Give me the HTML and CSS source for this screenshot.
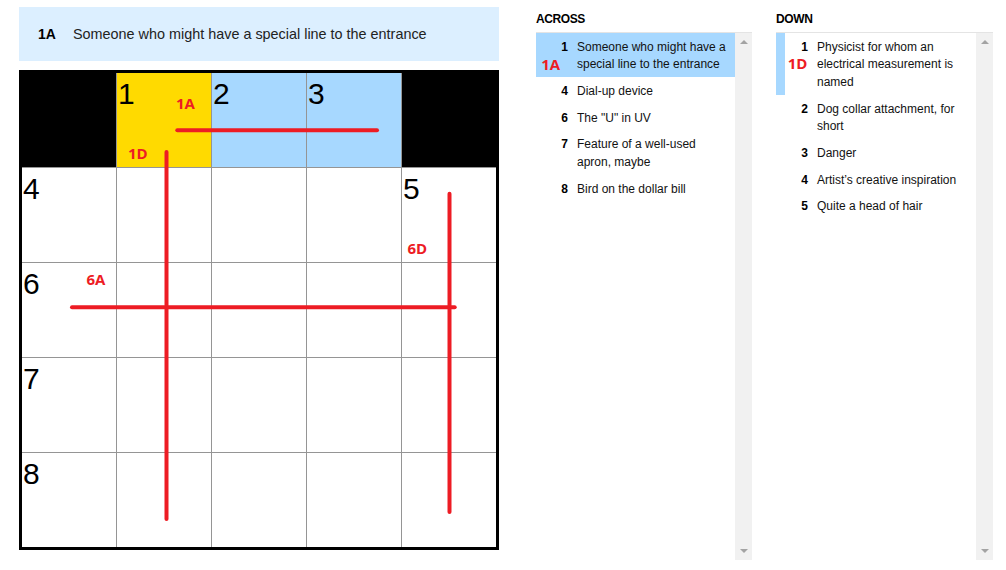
FILE: index.html
```html
<!DOCTYPE html>
<html lang="en">
<head>
<meta charset="utf-8">
<title>Crossword</title>
<link rel="stylesheet" href="styles.css">
</head>
<body>
<div class="app">
  <div class="board">
    <div class="clue-bar">
      <span class="clue-bar-num">1A</span>
      <span class="clue-bar-text">Someone who might have a special line to the entrance</span>
    </div>
    <div class="grid-wrap">
      <div class="grid">
        <div class="cell black"></div>
        <div class="cell sel"><span class="num">1</span></div>
        <div class="cell word"><span class="num">2</span></div>
        <div class="cell word"><span class="num">3</span></div>
        <div class="cell black"></div>

        <div class="cell"><span class="num">4</span></div>
        <div class="cell"></div>
        <div class="cell"></div>
        <div class="cell"></div>
        <div class="cell"><span class="num">5</span></div>

        <div class="cell"><span class="num">6</span></div>
        <div class="cell"></div>
        <div class="cell"></div>
        <div class="cell"></div>
        <div class="cell"></div>

        <div class="cell"><span class="num">7</span></div>
        <div class="cell"></div>
        <div class="cell"></div>
        <div class="cell"></div>
        <div class="cell"></div>

        <div class="cell"><span class="num">8</span></div>
        <div class="cell"></div>
        <div class="cell"></div>
        <div class="cell"></div>
        <div class="cell"></div>
      </div>
      <svg class="marks" width="480" height="480" viewBox="0 0 480 480">
        <line x1="158.3" y1="60.3" x2="358" y2="60.3"/>
        <line x1="147.5" y1="82" x2="147.5" y2="449"/>
        <line x1="53" y1="237.3" x2="435.7" y2="237.3"/>
        <line x1="430.5" y1="123.7" x2="430.5" y2="442"/>
      </svg>
      <span class="mark m-1a">1A</span>
      <span class="mark m-1d">1D</span>
      <span class="mark m-6a">6A</span>
      <span class="mark m-6d">6D</span>
    </div>
  </div>

  <div class="lists">
    <section class="list">
      <h3 class="list-title">ACROSS</h3>
      <div class="list-box">
        <ol class="clues">
          <li class="clue active"><span class="clue-num">1</span><span class="clue-text">Someone who might have a special line to the entrance</span><span class="mark m-list-a">1A</span></li>
          <li class="clue"><span class="clue-num">4</span><span class="clue-text">Dial-up device</span></li>
          <li class="clue"><span class="clue-num">6</span><span class="clue-text">The "U" in UV</span></li>
          <li class="clue"><span class="clue-num">7</span><span class="clue-text">Feature of a well-used apron, maybe</span></li>
          <li class="clue"><span class="clue-num">8</span><span class="clue-text">Bird on the dollar bill</span></li>
        </ol>
        <div class="scrollbar"><span class="sb-btn sb-up"></span><span class="sb-btn sb-down"></span></div>
      </div>
    </section>
    <section class="list">
      <h3 class="list-title">DOWN</h3>
      <div class="list-box">
        <ol class="clues">
          <li class="clue cross"><span class="clue-num">1</span><span class="clue-text">Physicist for whom an electrical measurement is named</span><span class="mark m-list-d">1D</span></li>
          <li class="clue"><span class="clue-num">2</span><span class="clue-text">Dog collar attachment, for short</span></li>
          <li class="clue"><span class="clue-num">3</span><span class="clue-text">Danger</span></li>
          <li class="clue"><span class="clue-num">4</span><span class="clue-text">Artist’s creative inspiration</span></li>
          <li class="clue"><span class="clue-num">5</span><span class="clue-text">Quite a head of hair</span></li>
        </ol>
        <div class="scrollbar"><span class="sb-btn sb-up"></span><span class="sb-btn sb-down"></span></div>
      </div>
    </section>
  </div>
</div>
</body>
</html>
```

FILE: styles.css
```css
* { box-sizing: border-box; }

body {
  margin: 0;
  font-family: "Liberation Sans", Arial, sans-serif;
  color: #121212;
  background: #fff;
}

.app {
  display: flex;
  align-items: flex-start;
  padding-left: 19px;
  gap: 37px;
}

/* ---------- board ---------- */
.board {
  width: 480px;
  padding-top: 7px;
}

.clue-bar {
  height: 54px;
  background: #dcefff;
  display: flex;
  align-items: center;
  padding-left: 19px;
}

.clue-bar-num {
  width: 35px;
  flex: none;
  font-size: 14px;
  font-weight: bold;
  color: #000;
}

.clue-bar-text {
  font-size: 14.4px;
  color: #222;
}

.grid-wrap {
  position: relative;
  margin-top: 9px;
}

.grid {
  display: grid;
  grid-template-columns: repeat(5, 94px);
  grid-auto-rows: 94px;
  gap: 1px;
  background: #959595;
  border: 3px solid #000;
  width: 480px;
}

.cell {
  background: #fff;
}

.cell.black { background: #000; }
.cell.sel { background: #ffda00; }
.cell.word { background: #a7d8ff; }

.num {
  display: block;
  font-family: "Liberation Sans", Arial, sans-serif;
  font-size: 30px;
  line-height: 30px;
  padding: 6px 0 0 1px;
  color: #000;
}

.marks {
  position: absolute;
  left: 0;
  top: 0;
  pointer-events: none;
}

.marks line {
  stroke: #ed1c24;
  stroke-width: 4;
  stroke-linecap: round;
}

.mark {
  position: absolute;
  font-family: "Open Sans", "Liberation Sans", sans-serif;
  font-weight: bold;
  font-size: 15px;
  line-height: 15px;
  color: #ed1c24;
  white-space: nowrap;
}

.m-1a { left: 157px; top: 26.4px; }
.m-1d { left: 109px; top: 75.7px; }
.m-6a { left: 67.5px; top: 201.7px; }
.m-6d { left: 388.5px; top: 170.7px; }

/* ---------- clue lists ---------- */
.lists {
  display: grid;
  grid-template-columns: 216px 217px;
  gap: 24px;
}

.list-title {
  margin: 0;
  padding: 13px 0 7px;
  font-size: 12px;
  line-height: 12px;
  font-weight: bold;
  letter-spacing: -0.4px;
  color: #000;
  border-bottom: 1px solid #e4e4e4;
}

.list-box {
  display: flex;
  height: 527px;
}

.clues {
  flex: 1;
  list-style: none;
  margin: 0;
  padding: 0;
}

.clue {
  position: relative;
  display: flex;
  padding: 5.5px 6px 3.5px 0;
  font-size: 12px;
  line-height: 17.7px;
}

.clue.active { background: #a7d8ff; }
.clue.cross { box-shadow: inset 9px 0 0 #a7d8ff; }

.clue-num {
  flex: none;
  width: 32px;
  margin-right: 9px;
  text-align: right;
  font-weight: bold;
  color: #000;
}

.clue-text { flex: 1; }

.m-list-a { left: 5.2px; top: 24.3px; }
.m-list-d { left: 11.8px; top: 23px; }

.scrollbar {
  flex: none;
  width: 17px;
  background: #f1f1f1;
  display: flex;
  flex-direction: column;
  justify-content: space-between;
}

.sb-btn {
  height: 17px;
  display: flex;
  align-items: center;
  justify-content: center;
}

.sb-up::before,
.sb-down::before {
  content: "";
  width: 0;
  height: 0;
  border-left: 4px solid transparent;
  border-right: 4px solid transparent;
}

.sb-up::before { border-bottom: 4px solid #a3a3a3; }
.sb-down::before { border-top: 4px solid #a3a3a3; margin-top: -2px; }
```
